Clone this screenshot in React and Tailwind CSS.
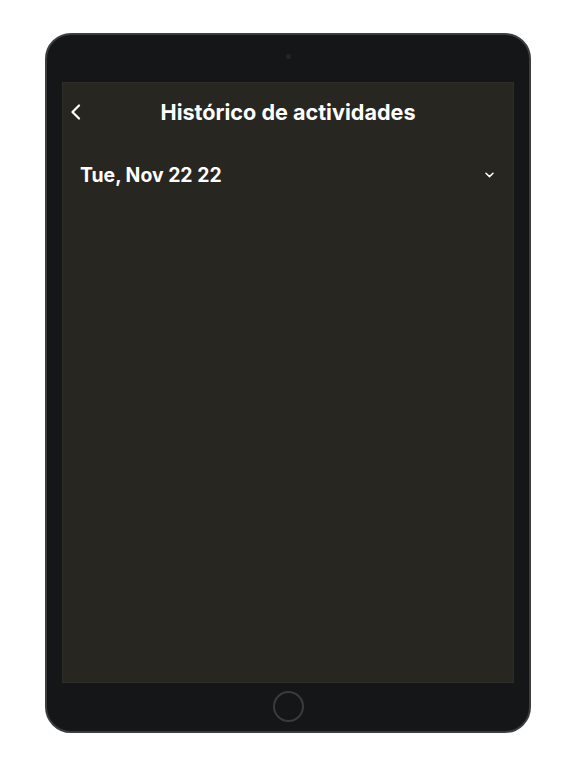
export default function App() {
  return (
    <div className="w-[576px] h-[768px] bg-white flex justify-center pt-[33px]" style={{ fontFamily: 'Inter, "Noto Sans", sans-serif' }}>
      <div className="w-[486px] h-[700px] rounded-[26px] border-2 border-[#3c3d3f] bg-[#151617] flex flex-col">
        <div className="h-[47px] flex items-center justify-center">
          <div className="w-[5px] h-[5px] rounded-full bg-[#242527] mt-[-4px]"></div>
        </div>
        <div className="h-[601px] mx-[15px] bg-[#272621] border border-[#2e2d29] flex flex-col">
          <div className="relative h-[60px] flex items-center justify-center">
            <svg className="absolute left-[7px] top-[21px]" width="11" height="16" viewBox="0 0 11 16" fill="none">
              <path d="M9 1.5 L2.5 8 L9 14.5" stroke="white" strokeWidth="2.2" strokeLinecap="round" strokeLinejoin="round" />
            </svg>
            <span className="text-white font-bold text-[21.6px] leading-none">Histórico de actividades</span>
          </div>
          <div className="h-[64px] flex items-center justify-between pl-[17px] pr-[19px]">
            <span className="text-white font-bold text-[19.4px] leading-none mt-[2px]">Tue, Nov 22 22</span>
            <svg width="9" height="6" viewBox="0 0 9 6" fill="none">
              <path d="M1 1.2 L4.5 4.6 L8 1.2" stroke="white" strokeWidth="1.5" strokeLinecap="round" strokeLinejoin="round" />
            </svg>
          </div>
        </div>
        <div className="flex-1 flex items-center justify-center">
          <div className="w-[31px] h-[31px] rounded-full border-2 border-[#3a3b3d] mt-[-1px]"></div>
        </div>
      </div>
    </div>
  );
}
